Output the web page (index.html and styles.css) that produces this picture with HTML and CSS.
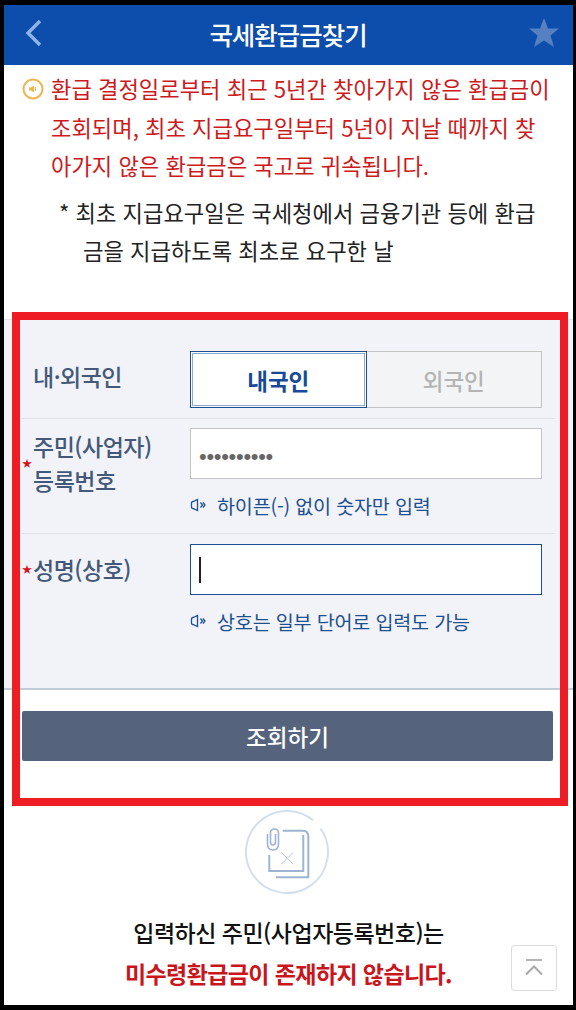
FILE: index.html
```html
<!DOCTYPE html>
<html lang="ko">
<head>
    <meta charset="UTF-8">
    <title>국세환급금찾기</title>
    <link rel="stylesheet" href="styles.css">
</head>
<body>
    <div class="screen">
        <div class="header">
            <svg class="back" width="20" height="30" viewBox="0 0 20 30"><path d="M16 3 L4 15 L16 27" fill="none" stroke="#8fb3e6" stroke-width="3.4"/></svg>
            <div class="title">국세환급금찾기</div>
            <svg class="star" width="32" height="32" viewBox="0 0 32 32"><path d="M16 1 L20 11.500 L31 11.500 L22.500 18.500 L26 30 L16 23.500 L6 30 L9.500 18.500 L1 11.500 L12 11.500 Z" fill="#5680c2"/></svg>
        </div>

        <div class="notice">
            <svg class="notice-icon" width="22" height="22" viewBox="0 0 22 22">
                <circle cx="11" cy="11" r="9.500" fill="#fff" stroke="#f0b44c" stroke-width="2"/>
                <path d="M7 9.500 H9 L12 7.500 V14.500 L9 12.500 H7 Z" fill="#f0b44c"/>
                <path d="M13.500 9 V13" stroke="#f0b44c" stroke-width="1"/>
            </svg>
            <p class="notice-text">환급 결정일로부터 최근 5년간 찾아가지 않은 환급금이 조회되며, 최초 지급요구일부터 5년이 지날 때까지 찾아가지 않은 환급금은 국고로 귀속됩니다.</p>
        </div>
        <p class="notice-sub">* 최초 지급요구일은 국세청에서 금융기관 등에 환급금을 지급하도록 최초로 요구한 날</p>

        <div class="form">
            <div class="row row-type">
                <div class="label">내·외국인</div>
                <div class="field">
                    <div class="toggle">
                        <div class="toggle-item on">내국인</div>
                        <div class="toggle-item">외국인</div>
                    </div>
                </div>
            </div>
            <div class="row row-id">
                <div class="label req">주민(사업자)<br>등록번호</div>
                <div class="field">
                    <div class="input dots">••••••••••</div>
                    <div class="hint">
                        <svg width="17" height="14" viewBox="0 0 17 14"><path d="M1.500 5 Q1.500 3.500 3 3.500 L7.500 1.500 V12.500 L3 10.500 Q1.500 10.500 1.500 9 Z M10.500 4.500 L12.500 7 L10.500 9.500 M13 4.500 L15 7 L13 9.500" fill="none" stroke="#1d4f91" stroke-width="1.300"/></svg>
                        하이픈(-) 없이 숫자만 입력
                    </div>
                </div>
            </div>
            <div class="row row-name">
                <div class="label req">성명(상호)</div>
                <div class="field">
                    <div class="input focus"><span class="caret"></span></div>
                    <div class="hint">
                        <svg width="17" height="14" viewBox="0 0 17 14"><path d="M1.500 5 Q1.500 3.500 3 3.500 L7.500 1.500 V12.500 L3 10.500 Q1.500 10.500 1.500 9 Z M10.500 4.500 L12.500 7 L10.500 9.500 M13 4.500 L15 7 L13 9.500" fill="none" stroke="#1d4f91" stroke-width="1.300"/></svg>
                        상호는 일부 단어로 입력도 가능
                    </div>
                </div>
            </div>
        </div>

        <div class="actions">
            <div class="btn">조회하기</div>
        </div>

        <div class="result">
            <svg class="result-icon" width="86" height="86" viewBox="0 0 86 86">
                <circle cx="43" cy="43" r="41" fill="#fff" stroke="#d5dfea" stroke-width="2" stroke-dasharray="246 11.600" transform="rotate(-35 43 43)"/>
                <path d="M38.700 21.700 H59 Q64.300 21.700 64.300 28 V68.300 H32" fill="none" stroke="#9db4d2" stroke-width="2"/>
                <path d="M25.300 46 V62 H59.300 V26" fill="none" stroke="#9db4d2" stroke-width="2"/>
                <path d="M23.500 25 V35 Q23.500 41 29 41 Q34.500 41 34.500 35 V24 Q34.500 20 30.500 20 Q26.500 20 26.500 24 V33 Q26.500 36 29 36 Q31.500 36 31.500 33 V25" fill="none" stroke="#9db4d2" stroke-width="1.600"/>
                <path d="M37.300 43.300 L49.300 55.300 M49.300 43.300 L37.300 55.300" stroke="#b8c8dc" stroke-width="1"/>
            </svg>
            <div class="result-text">입력하신 주민(사업자등록번호)는</div>
            <div class="result-alert">미수령환급금이 존재하지 않습니다.</div>
        </div>

        <div class="top-btn">
            <svg width="20" height="20" viewBox="0 0 20 20"><path d="M2 2 H18" stroke="#b5b5b5" stroke-width="2"/><path d="M2 16.500 L10 8.500 L18 16.500" fill="none" stroke="#a8a8a8" stroke-width="2"/></svg>
        </div>
    </div>
    <div class="highlight"></div>
</body>
</html>
```

FILE: styles.css
```css
* {
    box-sizing: border-box;
}
html, body {
    margin: 0;
    padding: 0;
    height: 100%;
}
body {
    background: #000;
    padding: 5px 3px 5px 4px;
    font-family: "Noto Sans CJK KR", "Noto Sans", sans-serif;
    overflow: hidden;
}
.screen {
    position: relative;
    background: #fff;
    height: 1000px;
    overflow: hidden;
}
.header {
    height: 60px;
    background: #0d4dab;
    display: flex;
    align-items: center;
    justify-content: space-between;
    padding: 0 13px 4px 20px;
}
.title {
    color: #fff;
    font-size: 25.500px;
    font-weight: 500;
    letter-spacing: -1px;
    margin-left: 4px;
}
.notice {
    display: flex;
    align-items: flex-start;
    padding: 4px 0 0 18px;
}
.notice-icon {
    flex: none;
    margin: 9px 7px 0 0;
}
.notice-text {
    margin: 0;
    width: 501px;
    color: #cc1a20;
    font-size: 22.200px;
    line-height: 38.500px;
    word-break: break-all;
}
.notice-sub {
    margin: 8px 0 0 0;
    padding: 0 30px 0 79px;
    text-indent: -24px;
    color: #222;
    font-size: 22.200px;
    line-height: 38.500px;
    word-break: break-all;
}
.form {
    margin-top: 49.500px;
    height: 371px;
    background: #f1f3f8;
    border-top: 1px solid #dfe3ea;
    border-bottom: 2px solid #c0ccd8;
}
.row {
    display: flex;
    margin: 0 18px;
    border-bottom: 1px solid #dde1e8;
}
.row-type {
    height: 99px;
    padding-top: 31px;
}
.row-id {
    height: 115px;
    padding-top: 9px;
}
.row-name {
    border-bottom: none;
    padding-top: 10px;
}
.label {
    position: relative;
    align-self: flex-start;
    width: 168px;
    flex: none;
    padding-left: 11px;
    color: #44597a;
    font-size: 23px;
    font-weight: 500;
    line-height: 34px;
    letter-spacing: -0.500px;
}
.req::before {
    content: "★";
    position: absolute;
    left: 0;
    top: 50%;
    margin-top: -6px;
    color: #d4141c;
    font-size: 10px;
    line-height: 12px;
}
.row-type .label {
    line-height: 50px;
}
.row-id .label {
    padding-top: 1px;
}
.row-name .label {
    padding-top: 8px;
}
.row-name .req::before {
    top: 25px;
}
.field {
    width: 352px;
    flex: none;
}
.toggle {
    display: flex;
    height: 57px;
}
.toggle-item {
    flex: 1;
    display: flex;
    align-items: center;
    justify-content: center;
    background: #f3f4f6;
    border: 1px solid #c4c4c4;
    border-left: none;
    color: #b4b4b4;
    font-size: 22.500px;
    font-weight: 500;
}
.toggle-item.on {
    background: #fff;
    border: 1px solid #1d4f91;
    outline: 1px solid #8fa9cc;
    outline-offset: -3px;
    color: #164a97;
    font-weight: 700;
}
.input {
    height: 51px;
    background: #fff;
    border: 1px solid #c4c4c4;
    display: flex;
    align-items: center;
    padding-left: 8px;
}
.dots {
    color: #666;
    padding-top: 6px;
    font-family: "Liberation Sans", sans-serif;
    font-size: 22px;
    letter-spacing: -0.300px;
}
.focus {
    border-color: #1d4f91;
}
.caret {
    width: 2px;
    height: 26px;
    background: #222;
}
.hint {
    display: flex;
    align-items: center;
    gap: 10px;
    height: 26px;
    margin-top: 13px;
    color: #1d4f91;
    font-size: 19.600px;
    letter-spacing: -0.200px;
}
.actions {
    padding: 21px 20px 0 18px;
}
.btn {
    height: 50px;
    background: #55647c;
    border-radius: 2px;
    color: #fff;
    font-size: 22.500px;
    font-weight: 500;
    display: flex;
    align-items: center;
    justify-content: center;
}
.result {
    padding-top: 48px;
    text-align: center;
}
.result-icon {
    display: block;
    margin: 0 auto;
    transform: translateX(-2px);
}
.result-text {
    margin-top: 16px;
    color: #111;
    font-size: 23px;
    font-weight: 500;
    line-height: 42px;
    letter-spacing: -0.500px;
}
.result-alert {
    color: #c9151b;
    font-size: 23px;
    font-weight: 700;
    line-height: 40px;
    letter-spacing: -0.600px;
}
.top-btn {
    position: absolute;
    right: 16px;
    bottom: 14px;
    width: 46px;
    height: 46px;
    background: #fff;
    border: 1px solid #dcdcdc;
    border-radius: 3px;
    display: flex;
    align-items: center;
    justify-content: center;
}
.highlight {
    position: absolute;
    left: 12px;
    top: 312px;
    width: 556px;
    height: 494px;
    border: 8px solid #ee1c25;
    pointer-events: none;
}
```
